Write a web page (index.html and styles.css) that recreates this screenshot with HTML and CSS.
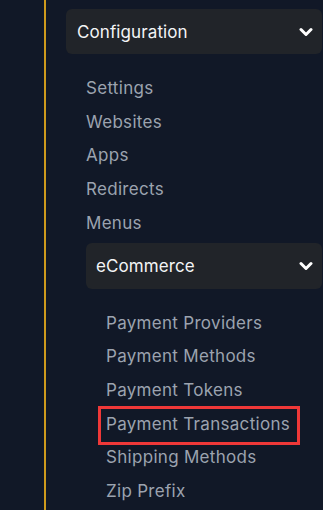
FILE: index.html
```html
<!DOCTYPE html>
<html>
   <head>
      <meta charset="UTF-8">
      <meta name="viewport" content="width=device-width, initial-scale=1.0"/>
      <title>Sidebar menu</title>
      <link rel="stylesheet" href="styles.css">
   </head>
   <body>
      <nav class="rail">
         <div class="group">
            <button class="group-head">
               <span>Configuration</span>
               <svg class="chevron" viewBox="0 0 14 10" width="14" height="10"><path d="M2 2.5 L7 7.5 L12 2.5"/></svg>
            </button>
            <ul class="menu">
               <li><a href="#">Settings</a></li>
               <li><a href="#">Websites</a></li>
               <li><a href="#">Apps</a></li>
               <li><a href="#">Redirects</a></li>
               <li><a href="#">Menus</a></li>
            </ul>

            <div class="group sub">
               <button class="group-head">
                  <span>eCommerce</span>
                  <svg class="chevron" viewBox="0 0 14 10" width="14" height="10"><path d="M2 2.5 L7 7.5 L12 2.5"/></svg>
               </button>
               <ul class="menu">
                  <li><a href="#">Payment Providers</a></li>
                  <li><a href="#">Payment Methods</a></li>
                  <li><a href="#">Payment Tokens</a></li>
                  <li><a href="#" class="marked">Payment Transactions</a></li>
                  <li><a href="#">Shipping Methods</a></li>
                  <li><a href="#">Zip Prefix</a></li>
               </ul>
            </div>
         </div>
      </nav>
   </body>
</html>
```

FILE: styles.css
```css
*
{
   box-sizing: border-box;
}

html,
body
{
   height: 100%;
}

body
{
   margin: 0;
   background: #111827;
   font-family: Inter, "Noto Sans", sans-serif;
   font-size: 17px;
   overflow: hidden;
}

.rail
{
   margin-left: 44px;
   min-height: 100%;
   border-left: 2px solid #cf9a1c;
   padding: 9px 1px 0 20px;
}

.group-head
{
   display: flex;
   align-items: center;
   justify-content: space-between;
   width: 100%;
   height: 45px;
   padding: 0 9px 0 11px;
   border: 0;
   border-radius: 6px;
   background: #212429;
   color: #f3f4f6;
   font: inherit;
   letter-spacing: 0.1px;
   text-align: left;
}

.sub .group-head
{
   height: 46px;
   padding-left: 10px;
}

.chevron
{
   fill: none;
   stroke: #ffffff;
   stroke-width: 3;
   stroke-linecap: round;
   stroke-linejoin: round;
}

.menu
{
   list-style: none;
   margin: 0;
   padding: 18px 0 2px 20px;
}

.menu a
{
   display: inline-block;
   line-height: 33.7px;
   color: #9ca3af;
   letter-spacing: 0.3px;
   text-decoration: none;
}

.sub
{
   margin-left: 20px;
}

.marked
{
   position: relative;
}

.marked::after
{
   content: "";
   position: absolute;
   left: -8px;
   right: -10px;
   top: -2px;
   bottom: -4px;
   border: 3px solid #ef3838;
}
```
